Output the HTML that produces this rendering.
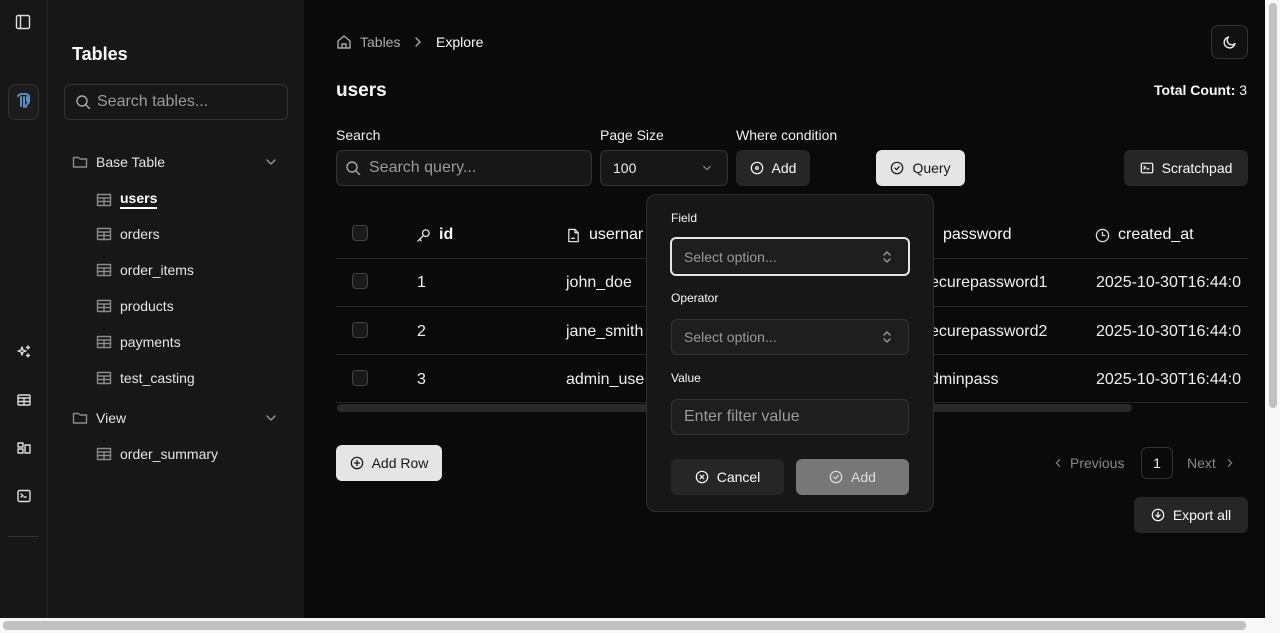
<!DOCTYPE html>
<html><head><meta charset="utf-8">
<style>
*{box-sizing:border-box;margin:0;padding:0}
body{width:1280px;height:633px;overflow:hidden;background:#0a0a0a;font-family:"Liberation Sans",sans-serif;color:#fafafa;position:relative}
.a{position:absolute}
.rail{left:0;top:0;width:48px;height:618px;background:#171717;border-right:1px solid #262626}
.side{left:48px;top:0;width:256px;height:618px;background:#171717}
svg{fill:none;stroke:currentColor;stroke-width:1.4;stroke-linecap:round;stroke-linejoin:round}
.item{position:absolute;left:96px;font-size:14px;color:#e5e5e5;display:flex;align-items:center;gap:8px}
.item svg{width:16px;height:16px;color:#8a8a8a}
.btn{position:absolute;border-radius:6px;background:#262626;font-size:14px;display:flex;align-items:center;justify-content:center;gap:8px}
.btn svg{width:14px;height:14px}
.lbl{position:absolute;font-size:14px;color:#f0f0f0}
.inp{position:absolute;border:1px solid #333;border-radius:6px;background:#171717;font-size:15px;color:#9a9a9a;display:flex;align-items:center}
.th{position:absolute;top:226px;font-size:16px;display:flex;align-items:center;gap:8px}
.cell{position:absolute;font-size:16px;color:#f0f0f0}
.hr{position:absolute;left:336px;width:912px;height:1px;background:#262626}
.cb{position:absolute;left:352px;width:16px;height:16px;border:1px solid #444;border-radius:4px;background:#1a1a1a}
</style></head><body>
<div class="a rail"></div>
<div class="a side"></div>
<svg class="a" style="left:15px;top:14px;width:16px;height:16px;color:#ddd" viewBox="0 0 16 16"><rect x="1.5" y="1.5" width="13" height="13" rx="1.5"/><path d="M5.5 1.5v13"/></svg>
<div class="a" style="left:8px;top:84px;width:31px;height:36px;border:1px solid #333;border-radius:8px;background:#1c1c1c"></div>
<svg class="a" style="left:16px;top:93px;width:15px;height:17px" viewBox="0 0 15 17"><path d="M2 3c2-3 9-3 11 0v6c-1 2-3 2-3 5M5 4v9M8 4v10M11 4v4" stroke="#5b8fc7" stroke-width="2"/></svg>
<svg class="a" style="left:17px;top:345px;width:14px;height:14px;color:#ddd" viewBox="0 0 14 14"><path d="M5 2l1 3 3 1-3 1-1 3-1-3-3-1 3-1zM11 1v3M9.5 2.5h3M11 9v3M9.5 10.5h3"/></svg>
<svg class="a" style="left:17px;top:393px;width:14px;height:14px;color:#ddd" viewBox="0 0 14 14"><rect x="1" y="2" width="12" height="10" rx="1"/><path d="M1 5h12M1 8.5h12M7 5v7"/></svg>
<svg class="a" style="left:17px;top:441px;width:14px;height:14px;color:#ddd" viewBox="0 0 14 14"><rect x="1" y="2" width="5" height="4"/><rect x="1" y="8" width="5" height="4"/><rect x="8" y="4" width="5" height="8"/></svg>
<svg class="a" style="left:17px;top:489px;width:14px;height:14px;color:#ddd" viewBox="0 0 14 14"><rect x="1" y="1.5" width="12" height="11" rx="1.5"/><path d="M4 5l2 1.5L4 8M7 8h2"/></svg>
<div class="a" style="left:8px;top:536px;width:31px;height:1px;background:#333"></div>
<div class="a" style="left:72px;top:44px;font-size:18px;font-weight:700">Tables</div>
<div class="inp" style="left:64px;top:84px;width:224px;height:36px;padding-left:32px;font-size:16px">Search tables...</div>
<svg class="a" style="left:75px;top:94px;width:16px;height:16px;color:#aaa" viewBox="0 0 16 16"><circle cx="7" cy="7" r="5"/><path d="M11 11l3.5 3.5"/></svg>
<div class="item" style="left:72px;top:154px"><svg viewBox="0 0 16 16"><path d="M1.5 3.5h5l1.5 1.5h6.5v8h-13z"/></svg>Base Table</div>
<svg class="a" style="left:265px;top:156px;width:12px;height:12px;color:#999" viewBox="0 0 12 12"><path d="M2 4l4 4 4-4"/></svg>
<div class="item" style="top:190px"><svg viewBox="0 0 16 16"><rect x="1.5" y="2.5" width="13" height="11"/><path d="M1.5 6h13M1.5 9.5h13M8 6v7.5"/></svg><span style="font-weight:700;color:#fff;border-bottom:2px solid #fff;line-height:17px">users</span></div>
<div class="item" style="top:226px"><svg viewBox="0 0 16 16"><rect x="1.5" y="2.5" width="13" height="11"/><path d="M1.5 6h13M1.5 9.5h13M8 6v7.5"/></svg>orders</div>
<div class="item" style="top:262px"><svg viewBox="0 0 16 16"><rect x="1.5" y="2.5" width="13" height="11"/><path d="M1.5 6h13M1.5 9.5h13M8 6v7.5"/></svg>order_items</div>
<div class="item" style="top:298px"><svg viewBox="0 0 16 16"><rect x="1.5" y="2.5" width="13" height="11"/><path d="M1.5 6h13M1.5 9.5h13M8 6v7.5"/></svg>products</div>
<div class="item" style="top:334px"><svg viewBox="0 0 16 16"><rect x="1.5" y="2.5" width="13" height="11"/><path d="M1.5 6h13M1.5 9.5h13M8 6v7.5"/></svg>payments</div>
<div class="item" style="top:370px"><svg viewBox="0 0 16 16"><rect x="1.5" y="2.5" width="13" height="11"/><path d="M1.5 6h13M1.5 9.5h13M8 6v7.5"/></svg>test_casting</div>
<div class="item" style="left:72px;top:410px"><svg viewBox="0 0 16 16"><path d="M1.5 3.5h5l1.5 1.5h6.5v8h-13z"/></svg>View</div>
<svg class="a" style="left:265px;top:412px;width:12px;height:12px;color:#999" viewBox="0 0 12 12"><path d="M2 4l4 4 4-4"/></svg>
<div class="item" style="top:446px"><svg viewBox="0 0 16 16"><rect x="1.5" y="2.5" width="13" height="11"/><path d="M1.5 6h13M1.5 9.5h13M8 6v7.5"/></svg>order_summary</div>
<svg class="a" style="left:336px;top:34px;width:16px;height:16px;color:#aaa" viewBox="0 0 16 16"><path d="M2 7l6-5 6 5v7H2z M6 14v-4h4v4"/></svg>
<div class="a" style="left:360px;top:34px;font-size:14px;color:#aaa">Tables</div>
<svg class="a" style="left:412px;top:36px;width:12px;height:12px;color:#aaa" viewBox="0 0 12 12"><path d="M4 2l4 4-4 4"/></svg>
<div class="a" style="left:436px;top:34px;font-size:14px">Explore</div>
<div class="a" style="left:1211px;top:25px;width:37px;height:34px;border:1px solid #333;border-radius:7px;background:#111"></div>
<svg class="a" style="left:1222px;top:34px;width:16px;height:16px;color:#eee" viewBox="0 0 16 16"><path d="M13 9.5A5.5 5.5 0 1 1 6.5 3a4.3 4.3 0 0 0 6.5 6.5z"/></svg>
<div class="a" style="left:336px;top:80px;font-size:19px;font-weight:700">users</div>
<div class="a" style="left:1154px;top:82px;font-size:14px"><b>Total Count:</b> 3</div>
<div class="lbl" style="left:336px;top:127px">Search</div>
<div class="lbl" style="left:600px;top:127px">Page Size</div>
<div class="lbl" style="left:736px;top:127px">Where condition</div>
<div class="inp" style="left:336px;top:150px;width:256px;height:36px;padding-left:32px;font-size:16px">Search query...</div>
<svg class="a" style="left:345px;top:160px;width:16px;height:16px;color:#aaa" viewBox="0 0 16 16"><circle cx="7" cy="7" r="5"/><path d="M11 11l3.5 3.5"/></svg>
<div class="inp" style="left:600px;top:150px;width:128px;height:36px;padding-left:12px;color:#eee;font-size:14px">100</div>
<svg class="a" style="left:702px;top:163px;width:10px;height:10px;color:#888" viewBox="0 0 12 12"><path d="M2 4l4 4 4-4"/></svg>
<div class="btn" style="left:736px;top:150px;width:74px;height:36px"><svg viewBox="0 0 16 16"><circle cx="8" cy="8" r="6.5"/><circle cx="8" cy="8" r="1.5"/></svg>Add</div>
<div class="btn" style="left:876px;top:150px;width:89px;height:36px;background:#e5e5e5;color:#171717"><svg viewBox="0 0 16 16"><circle cx="8" cy="8" r="6.5"/><path d="M5.5 8l2 2 3-3.5"/></svg>Query</div>
<div class="btn" style="left:1124px;top:150px;width:124px;height:36px"><svg viewBox="0 0 16 16"><rect x="1.5" y="2.5" width="13" height="11" rx="1.5"/><path d="M4.5 6l2 1.5-2 1.5M8 9h2"/></svg>Scratchpad</div>
<div class="cb" style="top:225px"></div>
<div class="th" style="left:416px"><svg viewBox="0 0 16 16" style="width:15px;height:15px;color:#ddd"><circle cx="10.5" cy="5.5" r="3.5"/><path d="M8 8l-6 6M4 12l1.5 1.5"/></svg><b>id</b></div>
<div class="th" style="left:566px"><svg viewBox="0 0 16 16" style="width:15px;height:15px;color:#ddd"><path d="M3 1.5h6.5l3.5 3.5v9.5H3z M9.5 1.5V5H13 M6 11h3"/></svg>usernar</div>
<div class="th" style="left:943px">password</div>
<div class="th" style="left:1095px"><svg viewBox="0 0 16 16" style="width:15px;height:15px;color:#ddd"><circle cx="8" cy="8" r="6.5"/><path d="M8 4.5V8h2.5"/></svg>created_at</div>
<div class="hr" style="top:258px"></div>
<div class="cb" style="top:273px"></div><div class="cell" style="left:417px;top:274px">1</div><div class="cell" style="left:566px;top:274px">john_doe</div><div class="cell" style="left:930px;top:274px">ecurepassword1</div><div class="cell" style="left:1096px;top:274px">2025-10-30T16:44:0</div>
<div class="hr" style="top:306px"></div>
<div class="cb" style="top:322px"></div><div class="cell" style="left:417px;top:323px">2</div><div class="cell" style="left:566px;top:323px">jane_smith</div><div class="cell" style="left:930px;top:323px">ecurepassword2</div><div class="cell" style="left:1096px;top:323px">2025-10-30T16:44:0</div>
<div class="hr" style="top:354px"></div>
<div class="cb" style="top:370px"></div><div class="cell" style="left:417px;top:371px">3</div><div class="cell" style="left:566px;top:371px">admin_use</div><div class="cell" style="left:930px;top:371px">dminpass</div><div class="cell" style="left:1096px;top:371px">2025-10-30T16:44:0</div>
<div class="hr" style="top:402px"></div>
<div class="a" style="left:337px;top:404px;width:795px;height:8px;border-radius:4px;background:#2a2a2a"></div>
<div class="btn" style="left:336px;top:445px;width:106px;height:36px;background:#e5e5e5;color:#171717"><svg viewBox="0 0 16 16"><circle cx="8" cy="8" r="6.5"/><path d="M8 5v6M5 8h6"/></svg>Add Row</div>
<svg class="a" style="left:1053px;top:458px;width:10px;height:10px;color:#888" viewBox="0 0 12 12"><path d="M8 2L4 6l4 4"/></svg>
<div class="a" style="left:1070px;top:455px;font-size:14px;color:#888">Previous</div>
<div class="a" style="left:1141px;top:447px;width:32px;height:32px;border:1px solid #333;border-radius:6px;font-size:14px;display:flex;align-items:center;justify-content:center">1</div>
<div class="a" style="left:1187px;top:455px;font-size:14px;color:#888">Next</div>
<svg class="a" style="left:1225px;top:458px;width:10px;height:10px;color:#888" viewBox="0 0 12 12"><path d="M4 2l4 4-4 4"/></svg>
<div class="btn" style="left:1134px;top:497px;width:114px;height:36px"><svg viewBox="0 0 16 16"><circle cx="8" cy="8" r="6.5"/><path d="M8 5v5M5.5 8l2.5 2.5L10.5 8"/></svg>Export all</div>
<div class="a" style="left:646px;top:194px;width:288px;height:318px;background:#171717;border:1px solid #2e2e2e;border-radius:10px"></div>
<div class="a" style="left:671px;top:211px;font-size:12px">Field</div>
<div class="inp" style="left:670px;top:237px;width:240px;height:39px;border:2px solid #e5e5e5;padding-left:12px;font-size:14px;background:#1e1e1e">Select option...</div>
<svg class="a" style="left:881px;top:250px;width:12px;height:14px;color:#999" viewBox="0 0 12 14"><path d="M3 5l3-3 3 3M3 9l3 3 3-3"/></svg>
<div class="a" style="left:671px;top:291px;font-size:12px">Operator</div>
<div class="inp" style="left:671px;top:319px;width:238px;height:36px;padding-left:12px;font-size:14px;background:#1e1e1e">Select option...</div>
<svg class="a" style="left:881px;top:330px;width:12px;height:14px;color:#999" viewBox="0 0 12 14"><path d="M3 5l3-3 3 3M3 9l3 3 3-3"/></svg>
<div class="a" style="left:671px;top:371px;font-size:12px">Value</div>
<div class="inp" style="left:671px;top:399px;width:238px;height:36px;padding-left:12px;font-size:16px;background:#1e1e1e">Enter filter value</div>
<div class="btn" style="left:671px;top:459px;width:113px;height:36px"><svg viewBox="0 0 16 16"><circle cx="8" cy="8" r="6.5"/><path d="M6 6l4 4M10 6l-4 4"/></svg>Cancel</div>
<div class="btn" style="left:796px;top:459px;width:113px;height:36px;background:#777;color:#ddd"><svg viewBox="0 0 16 16"><circle cx="8" cy="8" r="6.5"/><path d="M5.5 8l2 2 3-3.5"/></svg>Add</div>
<div class="a" style="left:1265px;top:0;width:15px;height:633px;background:#f8f8f8"></div>
<div class="a" style="left:1269px;top:3px;width:8px;height:405px;border-radius:4px;background:#c1c1c1"></div>
<div class="a" style="left:0;top:618px;width:1280px;height:15px;background:#f8f8f8"></div>
<div class="a" style="left:3px;top:621px;width:1243px;height:9px;border-radius:4px;background:#c1c1c1"></div>
</body></html>
